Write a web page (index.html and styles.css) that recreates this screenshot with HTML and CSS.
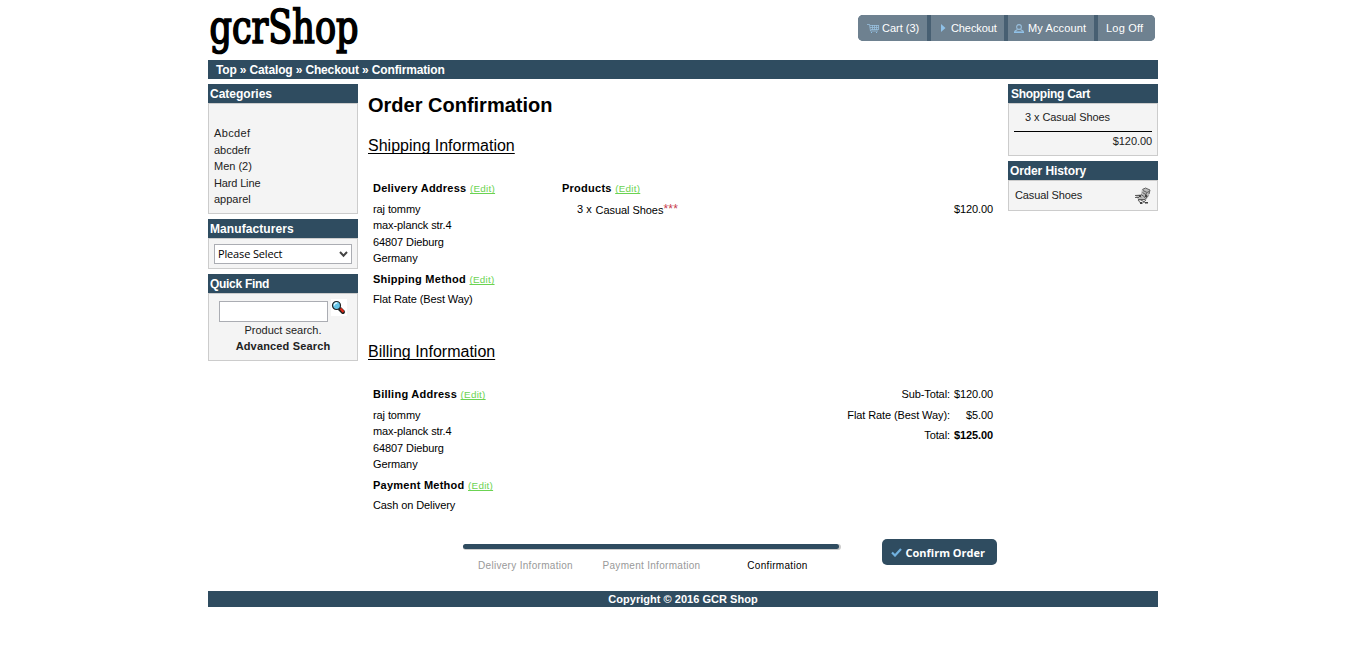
FILE: index.html
```html
<!DOCTYPE html>
<html lang="en">
<head>
<meta charset="utf-8">
<title>gcrShop</title>
<link rel="stylesheet" href="styles.css">
</head>
<body>
<div class="page">
  <header class="header">
    <svg class="logo" width="160" height="60" viewBox="0 0 160 60"><text class="logo-text" x="1.500" y="42.500" textLength="149" lengthAdjust="spacingAndGlyphs">gcrShop</text></svg>
    <nav class="nav">
      <a class="nav-item cart"><svg class="nav-icon" width="12" height="10" viewBox="0 0 12 10"><path class="line" d="M0 1.5h2.5l1 6.500h7.500M3 2.500h8.500M3 4.500h8.500M4 6.500h7M5.500 2v5M7.500 2v5M9.500 2v5M11.500 2v5"/><path class="solid" d="M4 9h1v1H4zM9 9h1v1H9z"/></svg><span>Cart (3)</span></a>
      <a class="nav-item checkout"><svg class="nav-icon" width="5" height="8" viewBox="0 0 5 8"><path class="solid" d="M0 0l4.500 4L0 8z"/></svg><span class="tight">Checkout</span></a>
      <a class="nav-item account"><svg class="nav-icon" width="10" height="9" viewBox="0 0 10 9"><circle class="line head-line" cx="5" cy="3" r="2.400"/><path class="line head-line" d="M3.500 5.500L1 7v1.200h8V7L6.500 5.500"/><path class="solid" d="M0 7.500h10V9H0z"/></svg><span class="loose">My Account</span></a>
      <a class="nav-item logoff"><span>Log Off</span></a>
    </nav>
  </header>
  <div class="crumbs"><span>Top » Catalog » Checkout » Confirmation</span></div>
  <div class="columns">
    <aside class="side">
      <section class="box">
        <h3 class="box-title">Categories</h3>
        <div class="box-body categories"><a class="wide">Abcdef</a><a>abcdefr</a><a>Men (2)</a><a class="narrow">Hard Line</a><a>apparel</a></div>
      </section>
      <section class="box">
        <h3 class="box-title t-man">Manufacturers</h3>
        <div class="box-body makers"><div class="select"><span>Please Select</span><svg width="9" height="7" viewBox="0 0 9 7"><path class="chevron" d="M1 1l3.500 3.700L8 1"/></svg></div></div>
      </section>
      <section class="box">
        <h3 class="box-title t-find">Quick Find</h3>
        <div class="box-body find">
          <div class="find-row"><input class="find-input" type="text" aria-label="Search">
            <svg class="lens" width="16" height="17" viewBox="0 0 16 17"><path class="paper" d="M0 0h16v17H0z"/><path class="lens-grip" d="M9 10l3 3"/><path class="lens-red" d="M9.500 9.500l3 3.500"/><circle class="lens-glass" cx="5.500" cy="6.500" r="4"/><path class="lens-shine" d="M3.300 6.500a2.500 2.500 0 0 1 3-2.500"/></svg></div>
          <div class="find-note">Product search.</div>
          <div class="find-adv">Advanced Search</div>
        </div>
      </section>
    </aside>
    <main class="main">
      <h1 class="title">Order Confirmation</h1>
      <h2 class="sub">Shipping Information</h2>
      <div class="info">
        <div class="address">
          <div class="head"><b>Delivery Address</b><a class="edit">(Edit)</a></div>
          <div class="lines">raj tommy<br>max-planck str.4<br>64807 Dieburg<br>Germany</div>
          <div class="head"><b>Shipping Method</b><a class="edit">(Edit)</a></div>
          <div class="lines">Flat Rate (Best Way)</div>
        </div>
        <div class="products">
          <div class="head"><b>Products</b><a class="edit">(Edit)</a></div>
          <div class="product"><span class="qty">3 x</span><span class="name">Casual Shoes</span><span class="stars">***</span><span class="price">$120.00</span></div>
        </div>
      </div>
      <h2 class="sub billing">Billing Information</h2>
      <div class="info">
        <div class="address">
          <div class="head"><b>Billing Address</b><a class="edit">(Edit)</a></div>
          <div class="lines">raj tommy<br>max-planck str.4<br>64807 Dieburg<br>Germany</div>
          <div class="head"><b>Payment Method</b><a class="edit">(Edit)</a></div>
          <div class="lines">Cash on Delivery</div>
        </div>
        <div class="totals">
          <span>Sub-Total:</span><span>$120.00</span>
          <span>Flat Rate (Best Way):</span><span>$5.00</span>
          <span>Total:</span><b>$125.00</b>
        </div>
      </div>
      <div class="actions">
        <div class="progress">
          <div class="track"><div class="bar"></div></div>
          <div class="steps"><span>Delivery Information</span><span>Payment Information</span><span class="current">Confirmation</span></div>
        </div>
        <button class="confirm"><svg width="11" height="9" viewBox="0 0 11 9"><path class="check" d="M1 4.500l3 3L10 1"/></svg><span>Confirm Order</span></button>
      </div>
    </main>
    <aside class="side">
      <section class="box">
        <h3 class="box-title t-cart">Shopping Cart</h3>
        <div class="box-body cart-box"><div class="cart-line">3 x Casual Shoes</div><div class="cart-total">$120.00</div></div>
      </section>
      <section class="box">
        <h3 class="box-title t-hist">Order History</h3>
        <div class="box-body history"><span>Casual Shoes</span>
          <svg width="17" height="18" viewBox="0 0 17 18"><path class="trolley-fill" d="M1 8l6-1 1-5 3-1 5 2-1 6-3 4-7 1z"/><path class="trolley" d="M8.500 2.500l3-1.500 4.500 2-1 4M9 3.500l4 2 2-1M8.500 5.500l4 2.500M1 8.500h4l2 2M1 10.500h4M4 12.500h7l3-4M12.500 6l-2 5M7 7.500l3 2M4 13l3 3.500M7 13l5 3M12 13l-4 3.500"/><path class="trolley-dark" d="M6 15h2v2H6zM11 15h3v1.500h-3zM5 8h2v2H5zM11 8h2v2h-2z"/></svg></div>
      </section>
    </aside>
  </div>
  <footer class="footer"><span>Copyright © 2016 GCR Shop</span></footer>
</div>
</body>
</html>
```
FILE: styles.css
```css
* { box-sizing: border-box; }
body { margin: 0; background: #fff; color: #000; font: 11px/16.5px "Liberation Sans", Arial, sans-serif; }
h1, h2, h3 { margin: 0; }
svg { display: block; flex: none; }
.page { width: 950px; margin: 0 auto; }
.header { height: 60px; display: flex; justify-content: space-between; }
.logo { overflow: visible; }
.logo-text { font-family: "DejaVu Serif Condensed", "DejaVu Serif", serif; font-stretch: condensed; font-size: 46px; fill: #000; stroke: #000; stroke-width: 1.7px; }
.nav { display: flex; gap: 4px; height: 26px; margin: 15px 3px 0 0; background: #475f72; border-radius: 5px; overflow: hidden; color: #fff; }
.nav-item { display: flex; align-items: center; background: #6e8190; white-space: nowrap; }
.nav-icon { margin-right: 4px; }
.nav .line { fill: none; stroke: #98bfdd; stroke-width: .8; }
.nav .head-line { stroke-width: 1.1; }
.nav .solid { fill: #8fc1e8; }
.cart { width: 69px; padding-left: 9px; }
.cart .nav-icon { margin-right: 3px; }
.checkout { width: 73px; padding-left: 10px; }
.checkout .nav-icon { margin-right: 5px; }
.account { width: 86px; padding-left: 6px; }
.logoff { width: 57px; padding-left: 8px; letter-spacing: .2px; }
.tight { letter-spacing: -.1px; }
.loose { letter-spacing: .12px; }
.crumbs { height: 19px; padding-left: 8px; background: #2f4c60; color: #fff; font-weight: bold; font-size: 12px; line-height: 20px; letter-spacing: -.15px; }
.columns { display: flex; padding-top: 5px; height: 512px; }
.side { width: 150px; display: flex; flex-direction: column; gap: 5px; }
.box-title { height: 19px; padding-left: 2px; background: #2f4c60; color: #fff; font-size: 12px; line-height: 20px; }
.box-body { border: 1px solid #ccc; background: #f4f4f4; color: #222; }
.t-man { letter-spacing: .08px; }
.t-find { letter-spacing: -.3px; }
.t-cart { padding-left: 3px; letter-spacing: -.28px; }
.t-hist { letter-spacing: -.1px; }
.categories { height: 111px; padding: 21px 5px 0; display: flex; flex-direction: column; }
.wide { letter-spacing: .35px; }
.narrow { letter-spacing: -.15px; }
.makers { height: 31px; padding: 5px; }
.select { height: 20px; padding: 0 3px; display: flex; align-items: center; justify-content: space-between; background: #fff; border: 1px solid #abadb3; color: #000; font: 11px/16px "Open Sans", sans-serif; letter-spacing: -.15px; }
.chevron { fill: none; stroke: #444; stroke-width: 2; }
.find { height: 68px; padding-top: 5px; text-align: center; }
.find-row { display: flex; padding-left: 10px; height: 23px; }
.find-input { width: 109px; height: 21px; margin: 2px 3px 0 0; padding: 0; border: 1px solid #abadb3; background: #fff; }
.paper { fill: #fff; }
.lens-grip { stroke: #222; stroke-width: 4; stroke-linecap: round; }
.lens-red { stroke: #e02a18; stroke-width: 2.2; }
.lens-glass { fill: #64c4e8; stroke: #222; stroke-width: 1.2; }
.lens-shine { fill: none; stroke: #dff7ff; stroke-width: 1.5; }
.find-note { height: 16px; }
.find-adv { font-weight: bold; line-height: 16px; letter-spacing: .16px; }
.main { width: 650px; padding: 8px 10px 0; letter-spacing: -.1px; }
.title { font-size: 20px; line-height: 26px; letter-spacing: 0; }
.sub { width: max-content; margin-top: 17px; font-size: 16px; line-height: 22px; font-weight: normal; letter-spacing: 0; text-decoration: underline; text-decoration-skip-ink: none; text-decoration-thickness: 1px; text-underline-offset: 2px; }
.info { display: flex; padding: 23px 5px 0; height: 154px; }
.address { width: 189px; }
.head { height: 20.500px; display: flex; gap: 3.500px; letter-spacing: .25px; }
.edit { padding-top: 1px; color: #6bd352; font-size: 9.900px; letter-spacing: .25px; text-decoration: underline; text-decoration-skip-ink: none; }
.lines { padding-bottom: 4px; }
.products { flex: 1; }
.product { display: flex; padding-left: 15px; }
.qty { letter-spacing: .1px; }
.name { margin-left: 3.500px; padding-top: 1px; letter-spacing: -.05px; }
.stars { color: #c8404e; font-size: 12px; letter-spacing: .3px; }
.price { margin-left: auto; }
.billing { margin-top: 30px; }
.totals { margin: 0 0 0 auto; height: 62px; display: grid; grid-template-columns: auto auto; grid-auto-rows: 20.500px; column-gap: 4px; text-align: right; }
.actions { display: flex; padding-left: 95px; margin-top: 22px; }
.progress { width: 378px; padding-top: 5px; }
.track { height: 6px; border-radius: 3px; background: #ccc; }
.bar { width: 376px; height: 5px; border-radius: 3px; background: #2f4c60; }
.steps { display: grid; grid-template-columns: 125px 127px 125px; margin-top: 8px; text-align: center; font-size: 10px; letter-spacing: .3px; color: #999; }
.current { color: #000; }
.confirm { width: 115px; height: 26px; margin-left: 41px; padding: 0 0 0 9px; border: 0; border-radius: 5px; background: #2f4c60; color: #fff; display: flex; align-items: center; gap: 3.500px; font: bold 11px "Open Sans", sans-serif; white-space: nowrap; }
.check { fill: none; stroke: #71b1df; stroke-width: 2.2; }
.cart-box { height: 53px; padding: 5px 5px 0; letter-spacing: -.08px; }
.cart-line { height: 23px; padding-left: 11px; border-bottom: 1px solid #000; }
.cart-total { text-align: right; padding-top: 1px; }
.history { height: 31px; padding: 0 6px; display: flex; align-items: center; justify-content: space-between; letter-spacing: -.12px; }
.trolley-fill { fill: #bbb; }
.trolley { fill: none; stroke: #555; stroke-width: .9; }
.trolley-dark { fill: #444; }
.footer { height: 16px; background: #2f4c60; color: #fff; text-align: center; font-weight: bold; line-height: 17px; letter-spacing: .03px; }
```
